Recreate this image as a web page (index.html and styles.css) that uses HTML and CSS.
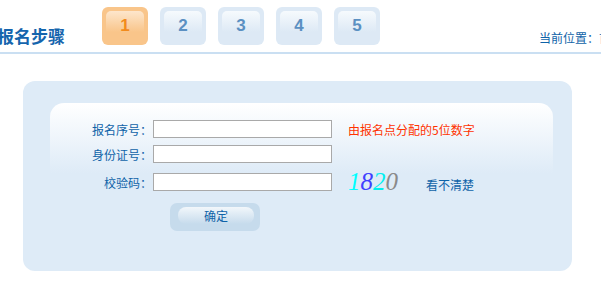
FILE: index.html
```html
<!DOCTYPE html>
<html lang="zh-CN">
<head>
  <meta charset="UTF-8">
  <title>报名步骤</title>
  <link rel="stylesheet" href="styles.css">
</head>
<body>
  <div class="top">
    <h2 class="title">报名步骤</h2>
    <ul class="steps">
      <li class="on"><span>1</span></li>
      <li><span>2</span></li>
      <li><span>3</span></li>
      <li><span>4</span></li>
      <li><span>5</span></li>
    </ul>
    <div class="where">当前位置：首页 &gt; 网上报名</div>
  </div>

  <div class="panel">
    <div class="inner">
      <div class="row">
        <label for="bmxh">报名序号：</label>
        <input type="text" id="bmxh">
        <span class="tip">由报名点分配的5位数字</span>
      </div>
      <div class="row">
        <label for="sfzh">身份证号：</label>
        <input type="text" id="sfzh">
        <span></span>
      </div>
      <div class="row row-code">
        <label for="yzm">校验码：</label>
        <input type="text" id="yzm">
        <span class="code-box">
          <span class="code"><i class="c1">1</i><i class="c2">8</i><i class="c3">2</i><i class="c4">0</i></span>
          <a class="refresh" href="#">看不清楚</a>
        </span>
      </div>
      <button class="ok"><span>确定</span></button>
    </div>
  </div>
</body>
</html>
```

FILE: styles.css
```css
html, body {
  margin: 0;
  overflow: hidden;
}

body {
  width: 601px;
  font-family: "Noto Sans CJK SC", sans-serif;
  font-size: 12px;
  color: #0f63a8;
}

/* header */
.top {
  display: flex;
  align-items: flex-end;
  height: 52px;
  border-bottom: 2px solid #cadff2;
  white-space: nowrap;
}

.title {
  margin: 0 0 6px -3px;
  font-size: 17px;
  line-height: 20px;
  font-weight: bold;
  color: #1565ad;
  flex-shrink: 0;
}

.steps {
  display: flex;
  gap: 12px;
  margin: 0 0 7px 37px;
  padding: 0;
  list-style: none;
  flex-shrink: 0;
}

.steps li {
  width: 46px;
  height: 38px;
  padding: 4px;
  box-sizing: border-box;
  background: #dde9f5;
  border-radius: 6px;
}

.steps li span {
  display: block;
  height: 30px;
  line-height: 30px;
  text-align: center;
  border-radius: 5px;
  background: linear-gradient(#f6fafd, #dde9f5 70%);
  font-family: "Liberation Sans", Arial, sans-serif;
  font-size: 17px;
  font-weight: bold;
  color: #5b90c2;
}

.steps li.on {
  background: #f9c58a;
}

.steps li.on span {
  background: linear-gradient(#fde6cc, #f9c58a 70%);
  color: #f28b1c;
}

.where {
  margin: 0 0 6px 159px;
  flex-shrink: 0;
  color: #0f63a8;
}

/* form panel */
.panel {
  margin: 27px 0 0 23px;
  width: 549px;
  height: 190px;
  padding-top: 22px;
  box-sizing: border-box;
  background: #deebf7;
  border-radius: 12px;
}

.inner {
  margin-left: 27px;
  width: 503px;
  padding-top: 17px;
  border-radius: 14px 14px 0 0;
  background: linear-gradient(#ffffff, #deebf7 70px) no-repeat;
}

.row {
  display: grid;
  grid-template-columns: 102px 179px auto;
  column-gap: 1px;
  align-items: center;
  margin-bottom: 7px;
}

.row label {
  text-align: right;
}

.row input {
  height: 18px;
  margin: 0;
  padding: 0 2px;
  box-sizing: border-box;
  border: 1px solid #a9a9a9;
  background: #fff;
}

.tip {
  padding-left: 15px;
  color: #ff3300;
}

.row-code {
  height: 24px;
}

.code-box {
  display: flex;
  align-items: flex-end;
  padding-left: 15px;
}

.code {
  font-family: "Liberation Serif", "Times New Roman", serif;
  font-style: italic;
  font-size: 25px;
  line-height: 22px;
}

.code i { font-style: italic; }
.c1 { color: #00ffff; }
.c2 { color: #4040ff; }
.c3 { color: #00f0f0; }
.c4 { color: #8a8a8a; }

.refresh {
  margin-left: 28px;
  line-height: 16px;
  color: #0f63a8;
  text-decoration: none;
}

.ok {
  display: block;
  margin: 9px 0 0 120px;
  width: 90px;
  height: 28px;
  padding: 4px 6px 7px 8px;
  border: none;
  border-radius: 7px;
  background: #c6dbec;
  font-family: inherit;
  font-size: 12px;
  color: #0f63a8;
  cursor: pointer;
}

.ok span {
  display: block;
  height: 17px;
  line-height: 17px;
  border-radius: 8px;
  background: linear-gradient(#f2f7fb, #c6dbec);
}
```
